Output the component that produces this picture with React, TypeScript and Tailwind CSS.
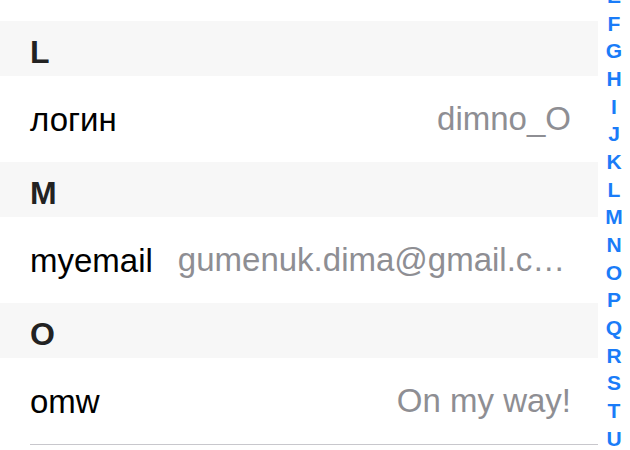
const sections = [
  { letter: "L", key: "логин", value: "dimno_O" },
  { letter: "M", key: "myemail", value: "gumenuk.dima@gmail.com" },
  { letter: "O", key: "omw", value: "On my way!" },
];

const indexLetters = "EFGHIJKLMNOPQRSTU".split("");

export default function App() {
  return (
    <div className="relative w-[630px] h-[450px] overflow-hidden bg-white font-['Liberation_Sans',Arial,sans-serif]">
      <div className="w-[598px]">
        <div className="h-[21px]" />
        {sections.map((s, i) => (
          <div key={s.letter}>
            <div className="h-[55px] bg-[#f7f7f7] flex items-center pl-[30px] pt-[6px]">
              <span className="text-[32px] font-bold text-[#222222] leading-none">{s.letter}</span>
            </div>
            <div className="h-[86px] flex items-center pl-[30px] pr-[27px] gap-[25px]">
              <span className="text-[33px] text-black leading-none whitespace-nowrap shrink-0">{s.key}</span>
              <span className="flex-1 min-w-0 text-right text-[33px] text-[#8e8e93] leading-normal truncate">
                {s.value}
              </span>
            </div>
            {i === sections.length - 1 && <div className="ml-[30px] h-px bg-[#c8c7cc]" />}
          </div>
        ))}
      </div>
      <div className="absolute right-0 top-[-18px] w-[32px] flex flex-col items-center">
        {indexLetters.map((l) => (
          <span key={l} className="text-[21px] font-bold leading-[27.67px] text-[#1a7cf8]">
            {l}
          </span>
        ))}
      </div>
    </div>
  );
}
